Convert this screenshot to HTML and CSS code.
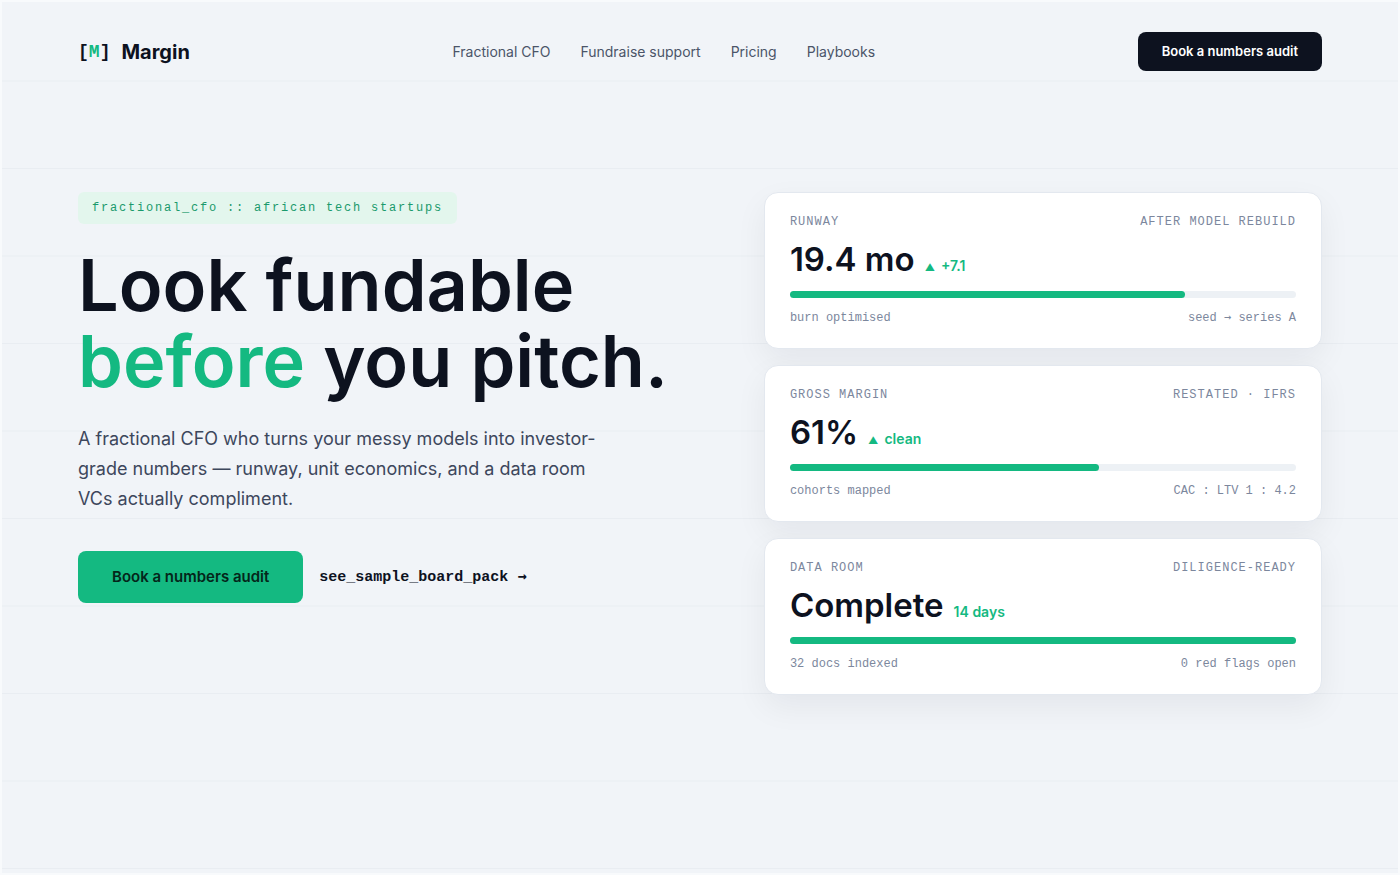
FILE: index.html
```
<!DOCTYPE html>
<html lang="en">
<head>
    <meta charset="UTF-8">
    <meta name="viewport" content="width=device-width, initial-scale=1.0">
    <title>Margin</title>
    <link rel="stylesheet" href="styles.css">
</head>
<body>
    <header class="nav">
        <a class="logo" href="#">
            <span class="logo-mark">[<span class="logo-m">M</span>]</span>
            <span>Margin</span>
        </a>
        <nav class="nav-links">
            <a href="#">Fractional CFO</a>
            <a href="#">Fundraise support</a>
            <a href="#">Pricing</a>
            <a href="#">Playbooks</a>
        </nav>
        <button class="btn btn-dark" type="button">Book a numbers audit</button>
    </header>

    <main class="hero">
        <section class="intro">
            <p class="eyebrow">fractional_cfo :: african tech startups</p>
            <h1>Look fundable<br><span class="green">before</span> you pitch.</h1>
            <p class="lead">A fractional CFO who turns your messy models into investor-grade numbers — runway, unit economics, and a data room VCs actually compliment.</p>
            <div class="actions">
                <button class="btn btn-green" type="button">Book a numbers audit</button>
                <a class="sample-link" href="#">see_sample_board_pack <span class="arrow">→</span></a>
            </div>
        </section>

        <section class="cards">
            <article class="card">
                <div class="card-row card-label"><span>RUNWAY</span><span>AFTER MODEL REBUILD</span></div>
                <div class="value">19.4 mo <span class="delta"><span class="up">▲</span>+7.1</span></div>
                <div class="bar"><div class="bar-fill" style="width: 78%"></div></div>
                <div class="card-row card-foot"><span>burn optimised</span><span>seed <span class="arrow">→</span> series A</span></div>
            </article>
            <article class="card">
                <div class="card-row card-label"><span>GROSS MARGIN</span><span>RESTATED · IFRS</span></div>
                <div class="value">61% <span class="delta"><span class="up">▲</span>clean</span></div>
                <div class="bar"><div class="bar-fill" style="width: 61%"></div></div>
                <div class="card-row card-foot"><span>cohorts mapped</span><span>CAC : LTV 1 : 4.2</span></div>
            </article>
            <article class="card">
                <div class="card-row card-label"><span>DATA ROOM</span><span>DILIGENCE-READY</span></div>
                <div class="value">Complete <span class="delta">14 days</span></div>
                <div class="bar"><div class="bar-fill" style="width: 100%"></div></div>
                <div class="card-row card-foot"><span>32 docs indexed</span><span>0 red flags open</span></div>
            </article>
        </section>
    </main>
</body>
</html>
```

FILE: styles.css
```
* {
    box-sizing: border-box;
}
body {
    margin: 0;
    min-height: 100vh;
    background-color: #f1f4f8;
    /* ledger lines */
    background-image: linear-gradient(to top, #e9edf2 1px, transparent 1px);
    background-size: 100% 10vh;
    background-position: 0 -6px;
    box-shadow: inset 0 0 0 2px #f8fafc;
    color: #0d121f;
    font-family: Inter, sans-serif;
}
a {
    color: inherit;
    text-decoration: none;
}
.nav {
    display: flex;
    align-items: center;
    justify-content: space-between;
    padding: 32px 78px 0;
}
.logo {
    display: flex;
    align-items: center;
    gap: 11px;
    font-size: 20px;
    font-weight: 700;
}
.logo-mark {
    font-family: "Liberation Mono", monospace;
    font-size: 18px;
}
.logo-m {
    color: #14b981;
}
.nav-links {
    display: flex;
    gap: 30px;
    color: #4b5568;
    font-size: 14px;
}
.btn {
    border: none;
    border-radius: 8px;
    font-family: inherit;
    font-weight: 600;
    cursor: pointer;
}
.btn-dark {
    padding: 0 24px;
    background: #0d121f;
    color: white;
    font-size: 13px;
    line-height: 39px;
}
.btn-green {
    padding: 0 34px;
    background: #14b981;
    color: #04261a;
    font-size: 15px;
    line-height: 52px;
}
.hero {
    display: grid;
    grid-template-columns: 1.1fr 1fr;
    gap: 72px;
    align-items: start;
    padding: 121px 78px 80px;
}
.eyebrow {
    display: inline-block;
    margin: 0;
    padding: 0 14px;
    border-radius: 6px;
    background: #e3f6ed;
    color: #1a9a6c;
    font-family: "Liberation Mono", monospace;
    font-size: 12px;
    line-height: 32px;
    letter-spacing: 0.15em;
    vertical-align: top;
}
h1 {
    margin: 23px 0 0;
    font-size: 72px;
    font-weight: 600;
    line-height: 76px;
}
.green {
    color: #14b981;
}
.lead {
    max-width: 540px;
    margin: 25px 0 0;
    color: #3d475c;
    font-size: 18px;
    line-height: 30px;
}
.actions {
    display: flex;
    align-items: center;
    gap: 16px;
    margin-top: 37px;
}
.sample-link {
    font-family: "Liberation Mono", monospace;
    font-size: 15px;
    font-weight: 700;
}
.arrow {
    font-family: "DejaVu Sans Mono", monospace;
    line-height: 1;
}
.cards {
    display: grid;
    gap: 16px;
}
.card {
    padding: 20px 25px 21px;
    border: 1px solid #e3e8ef;
    border-radius: 14px;
    background: white;
    box-shadow: 0 12px 32px rgba(15, 23, 42, 0.06);
}
.card-row {
    display: flex;
    justify-content: space-between;
    color: #7c879d;
    font-family: "Liberation Mono", monospace;
    font-size: 12px;
    line-height: 18px;
}
.card-label {
    letter-spacing: 1px;
}
.value {
    display: flex;
    align-items: baseline;
    gap: 10px;
    margin-top: 8px;
    font-size: 33px;
    font-weight: 600;
    line-height: 40px;
}
.delta {
    display: flex;
    align-items: baseline;
    gap: 6px;
    color: #14b981;
    font-size: 14px;
    line-height: 20px;
}
.up {
    font-size: 10px;
}
.bar {
    height: 7px;
    margin: 12px 0 11px;
    border-radius: 4px;
    background: #edf1f5;
}
.bar-fill {
    height: 100%;
    border-radius: 4px;
    background: #14b981;
}
```
